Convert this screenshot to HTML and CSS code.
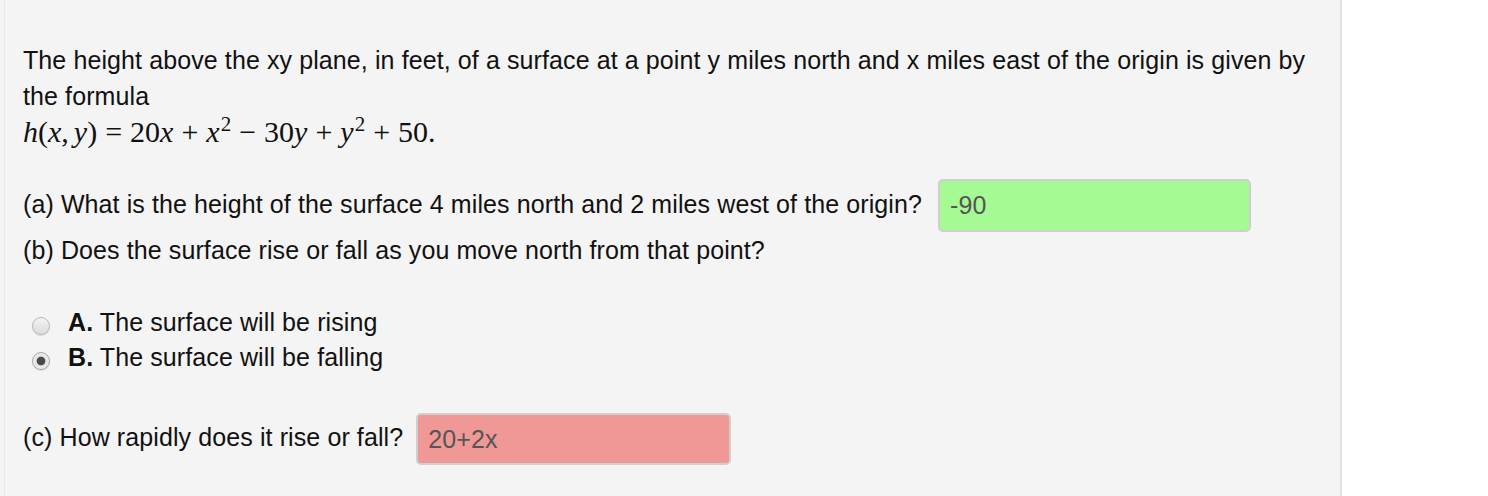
FILE: index.html
```html
<!DOCTYPE html>
<html>
<head>
<meta charset="utf-8">
<link rel="stylesheet" href="styles.css">
</head>
<body>
<div class="page">
  <div class="panel">
    <p class="intro">The height above the xy plane, in feet, of a surface at a point y miles north and x miles east of the origin is given by the formula<br>
      <span class="math"><i>h</i>(<i>x</i>,<span class="thin"></span><i>y</i>)<span class="op">=</span>20<i>x</i><span class="op">+</span><i>x</i><sup>2</sup><span class="op">−</span>30<i>y</i><span class="op">+</span><i>y</i><sup>2</sup><span class="op">+</span>50.</span>
    </p>
    <div class="row row-a">
      <span class="q">(a) What is the height of the surface 4 miles north and 2 miles west of the origin?</span>
      <span class="answer correct">-90</span>
    </div>
    <p class="q-line">(b) Does the surface rise or fall as you move north from that point?</p>
    <ul class="choices">
      <li class="choice"><span class="radio"></span><span><b>A.</b> The surface will be rising</span></li>
      <li class="choice"><span class="radio checked"></span><span><b>B.</b> The surface will be falling</span></li>
    </ul>
    <div class="row row-c">
      <span class="q">(c) How rapidly does it rise or fall?</span>
      <span class="answer wrong">20+2x</span>
    </div>
  </div>
</div>
</body>
</html>
```
FILE: styles.css
```css
html, body {
  margin: 0;
  padding: 0;
  background: #ffffff;
}
body {
  font-family: "Liberation Sans", Arial, sans-serif;
  font-size: 25px;
  letter-spacing: 0.1px;
  color: #111111;
}
.page {
  width: 1342px;
  height: 496px;
  background: #f4f4f4;
  border-right: 2px solid #e2e2e2;
  padding-left: 4px;
  box-sizing: border-box;
}
.panel {
  height: 100%;
  border-left: 1px solid #e8e8e8;
  padding: 42px 24px 0 18px;
  box-sizing: border-box;
}
.intro {
  margin: 0;
  line-height: 36px;
}
.math {
  font-family: "Liberation Serif", "Times New Roman", serif;
  font-size: 30px;
  letter-spacing: 0;
  line-height: 36px;
}
.math i {
  font-style: italic;
}
.math sup {
  font-size: 21px;
  line-height: 0;
  vertical-align: 11px;
  margin-left: 1px;
}
.math .op {
  margin: 0 8px;
}
.math .thin {
  display: inline-block;
  width: 5px;
}
.row {
  display: flex;
  align-items: center;
  gap: 16px;
}
.row-a {
  margin-top: 28px;
}
.row-c {
  margin-top: 38px;
  gap: 13px;
}
.q {
  line-height: 36px;
  position: relative;
  top: -2px;
}
.answer {
  display: flex;
  align-items: center;
  width: 313px;
  height: 53px;
  flex-shrink: 0;
  box-sizing: border-box;
  border: 2px solid #cfcfcf;
  border-radius: 5px;
  padding: 0 10px;
  color: #555555;
  font-size: 25px;
}
.row-c .answer {
  height: 52px;
  width: 315px;
}
.correct {
  background: #a6fa94;
}
.wrong {
  background: #f09896;
}
.q-line {
  margin: 0;
  line-height: 36px;
}
.choices {
  list-style: none;
  margin: 37px 0 0 0;
  padding: 0 0 0 9px;
}
.choice {
  display: flex;
  align-items: center;
  gap: 18px;
  height: 35px;
}
.radio {
  width: 18px;
  height: 18px;
  border-radius: 50%;
  box-sizing: border-box;
  border: 1px solid #b9b9b9;
  background: linear-gradient(#f3f3f3, #dcdcdc);
  box-shadow: 0 1px 1px rgba(0,0,0,0.12);
  position: relative;
  top: 3px;
}
.radio.checked {
  background: radial-gradient(circle, #4a4a4a 0, #4a4a4a 3.8px, #e4e4e4 4.8px, #f5f5f5 100%);
  border-color: #a8a8a8;
}
```
